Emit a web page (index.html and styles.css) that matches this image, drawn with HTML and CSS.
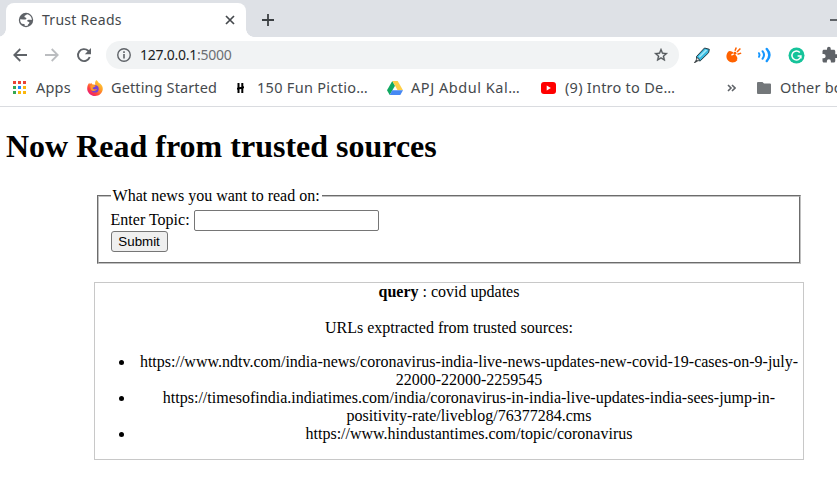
FILE: index.html
```
<!DOCTYPE html>
<html lang="en">
<head>
<meta charset="utf-8">
<title>Trust Reads</title>
<link rel="stylesheet" href="styles.css">
</head>
<body>
<header class="browser">
  <div class="tabs">
    <div class="tab">
      <svg class="globe" width="16" height="16" viewBox="0 0 16 16"><circle cx="8" cy="8" r="7.2" fill="#5f6368"/><path d="M9 2.300c-.4 1-2.500.9-2.600 2.200-.1 1.200 2 .8 2 1.900 0 1-1.200 1.200-3 1L2.200 7.200c-.3 1.700.4 3.400 1.600 4.500l2.200.2c.9.200.8 1.100.6 1.900 1.300.3 2.400.1 3.300-.3-.3-1.400 1.400-1.400 1.500-2.700.1-1.400-2.200-.7-2.200-2 0-1.200 1.800-1.200 3-1.100l1.600.2C13.900 5.300 11.900 2.800 9 2.300z" fill="#fff"/></svg>
      <span class="tab-title">Trust Reads</span>
      <svg class="close" width="10" height="10" viewBox="0 0 10 10"><path d="M1 1l8 8M9 1l-8 8" stroke="#45494d" stroke-width="1.7"/></svg>
    </div>
    <svg class="plus" width="12" height="12" viewBox="0 0 12 12"><path d="M6 0v12M0 6h12" stroke="#3c4043" stroke-width="1.8"/></svg>
    <i class="minimize"></i>
  </div>
  <div class="toolbar">
    <svg class="back" width="14" height="14" viewBox="0 0 14 14"><path d="M14 7H1.500M7.300 1L1.300 7l6 6" fill="none" stroke="#5f6368" stroke-width="1.800"/></svg>
    <svg class="forward" width="14" height="14" viewBox="0 0 14 14"><path d="M0 7h12.500M6.700 1l6 6-6 6" fill="none" stroke="#bbbdc0" stroke-width="1.800"/></svg>
    <svg class="reload" width="16" height="16" viewBox="0 0 16 16"><path d="M13.700 10A6 6 0 1 1 12.200 3.800L14 5.600" fill="none" stroke="#5f6368" stroke-width="1.900"/><path d="M15 1v6.200H8.800z" fill="#5f6368"/></svg>
    <div class="omnibox">
      <svg class="info" width="14" height="14" viewBox="0 0 14 14"><circle cx="7" cy="7" r="6.250" fill="none" stroke="#5f6368" stroke-width="1.400"/><path d="M7 6v4.500M7 3.300v1.600" stroke="#5f6368" stroke-width="1.600"/></svg>
      <span class="address">127.0.0.1<span class="port">:5000</span></span>
      <svg class="star" width="16" height="16" viewBox="0 0 24 24"><path d="M22 9.240l-7.190-.62L12 2 9.190 8.630 2 9.240l5.460 4.730L5.820 21 12 17.270 18.180 21l-1.630-7.030L22 9.240zM12 15.400l-3.760 2.270 1-4.280-3.320-2.880 4.380-.38L12 6.100l1.710 4.040 4.380.38-3.320 2.880 1 4.280L12 15.400z" fill="#505458" stroke="#505458" stroke-width=".5"/></svg>
    </div>
    <div class="extensions">
      <svg width="17" height="17" viewBox="0 0 17 17"><path d="M3.500 9.500L11.500 1l4.800 1.300-.7 3.400-8.400 8.200-3.700-.6z" fill="#36b9df" stroke="#25373f" stroke-width="1"/><path d="M5.500 9.500l7-7 2 .7-7.700 7.600z" fill="#9be5f7"/><path d="M3.500 9.600l3.800 3.500-2 .8-3.300 2H.8l2-2.800z" fill="#42484b"/><path d="M4 11l2 2-1 .4-1.500-1z" fill="#eee"/></svg>
      <svg width="16" height="16" viewBox="0 0 16 16"><path d="M2.200 4.700l9.300 8.200c-2.300 3-6.600 3.300-9.200.9-2.500-2.400-2.500-6.300-.1-9.100z" fill="#ff6200"/><ellipse cx="6.700" cy="8.600" rx="5.900" ry="2.700" transform="rotate(43 6.700 8.600)" fill="#ff6200"/><path d="M5.400 8.100l3.200-1.700" stroke="#fff" stroke-width="1.200"/><circle cx="9" cy="6.200" r="1.400" fill="#ff6200"/><path d="M9 3.800L10.300.5M11 5l3.400-3.500M11.500 7.200l3.700-1.100" stroke="#ff6200" stroke-width="1.500"/></svg>
      <svg width="15" height="16" viewBox="0 0 15 16"><g fill="none" stroke="#1697ff" stroke-width="2" stroke-linecap="round"><path d="M2 6.200q1.200 1.800 0 3.600"/><path d="M5.500 4.200q3 3.800 0 7.600"/><path d="M9.800 2q5.200 6 0 12" stroke-width="2.500"/></g></svg>
      <svg width="17" height="17" viewBox="0 0 17 17"><circle cx="8.500" cy="8.500" r="8" fill="#15c39a"/><path d="M11.800 5.400A4.500 4.500 0 1 0 12.900 9H9.600M12.900 9v2.500" fill="none" stroke="#fff" stroke-width="1.500"/></svg>
      <svg width="18" height="18" viewBox="0 0 24 24"><path d="M20.500 11H19V7c0-1.100-.9-2-2-2h-4V3.500a2.500 2.500 0 0 0-5 0V5H4c-1.100 0-2 .9-2 2v3.800h1.500a2.700 2.700 0 0 1 0 5.400H2V20c0 1.100.9 2 2 2h3.800v-1.500a2.700 2.700 0 0 1 5.400 0V22H17c1.100 0 2-.9 2-2v-4h1.500a2.500 2.500 0 0 0 0-5z" fill="#5f6368"/></svg>
    </div>
  </div>
  <nav class="bookmarks">
    <div class="bookmark apps">
      <svg width="13" height="13" viewBox="0 0 13 13"><path d="M0 0h3v3H0zM5 0h3v3H5zM10 0h3v3h-3z" fill="#ea4335"/><path d="M0 5h3v3H0zM0 10h3v3H0z" fill="#34a853"/><path d="M5 5h3v3H5z" fill="#1a87ff"/><path d="M10 5h3v3h-3zM5 10h3v3H5zM10 10h3v3h-3z" fill="#fbb70d"/></svg>
      <span>Apps</span>
    </div>
    <div class="bookmark firefox">
      <svg width="16" height="16" viewBox="0 0 16 16"><defs><linearGradient id="flame" x1="1" y1="0" x2=".2" y2="1"><stop offset="0" stop-color="#ffe740"/><stop offset=".45" stop-color="#ff9928"/><stop offset=".75" stop-color="#ff403f"/><stop offset="1" stop-color="#e31587"/></linearGradient></defs><path d="M9.200 0c1 .8 2 1.700 2.500 2.800 2.300 1.200 4.300 3.200 4.100 6.200-.3 4.200-3.600 7-7.700 7S.2 12.800.2 8.700c0-2.500.8-4.700 2.100-6l.5 1.500 1.500-1.500.7 1.500 3.300.5C8 3.200 8 1.500 9.200 0z" fill="url(#flame)"/><circle cx="8" cy="8.900" r="3.700" fill="#7542d8"/><path d="M3.300 5.500c2-.9 4.500-.6 5.200 1-1 .2-1.600 1-2.900 1.300.1 1.800 2.800 2 4.600.9-.8 2.100-4.400 3.300-6.400.7z" fill="#ff9b28"/></svg>
      <span>Getting Started</span>
    </div>
    <div class="bookmark pictionary">
      <svg width="7" height="10" viewBox="0 0 7 10"><path d="M1.500 0v10M5.300 0v10M0 5.700l7-1.500" stroke="#000" stroke-width="2"/></svg>
      <span>150 Fun Pictio…</span>
    </div>
    <div class="bookmark drive">
      <svg width="16" height="14" viewBox="0 0 16 14"><path d="M5.300 0L0 9.300 2.700 14 8 4.700z" fill="#11a861"/><path d="M5.300 0h5.400L16 9.300h-5.400z" fill="#ffcf48"/><path d="M5.300 9.300H16L13.300 14H2.700z" fill="#4688f4"/></svg>
      <span>APJ Abdul Kal…</span>
    </div>
    <div class="bookmark youtube">
      <svg width="15" height="12" viewBox="0 0 15 12"><rect width="15" height="12" rx="3" fill="#f00"/><path d="M5.700 3.500v5l4.200-2.500z" fill="#fff"/></svg>
      <span>(9) Intro to De…</span>
    </div>
    <svg class="more" width="9" height="8" viewBox="0 0 9 8"><path d="M1 1l3 3-3 3M5 1l3 3-3 3" fill="none" stroke="#5f6368" stroke-width="1.600"/></svg>
    <i class="divider"></i>
    <div class="bookmark other">
      <svg width="14" height="12" viewBox="0 0 14 12"><path d="M1 0h4.500L7 1.500h6a1 1 0 0 1 1 1V11a1 1 0 0 1-1 1H1a1 1 0 0 1-1-1V1a1 1 0 0 1 1-1z" fill="#73777a"/></svg>
      <span>Other bookmarks</span>
    </div>
  </nav>
</header>
<main>
  <h1>Now Read from trusted sources</h1>
  <form>
    <fieldset>
      <legend>What news you want to read on:</legend>
      <label for="topic">Enter Topic:</label>
      <input id="topic" type="text"><br>
      <button type="button">Submit</button>
    </fieldset>
  </form>
  <section class="results">
    <b>query</b> : covid updates<br><br>
    URLs exptracted from trusted sources:
    <ul>
      <li>https://www.ndtv.com/india-news/coronavirus-india-live-news-updates-new-covid-19-cases-on-9-july-22000-22000-2259545</li>
      <li>https://timesofindia.indiatimes.com/india/coronavirus-in-india-live-updates-india-sees-jump-in-positivity-rate/liveblog/76377284.cms</li>
      <li>https://www.hindustantimes.com/topic/coronavirus</li>
    </ul>
  </section>
</main>
</body>
</html>
```
FILE: styles.css
```
* { box-sizing: border-box; }
body {
  margin: 0;
  width: 837px;
  height: 501px;
  overflow: hidden;
  background: #fff;
  color: #000;
  font: 16px/18px "Liberation Serif", serif;
}
svg { display: block; flex: none; }
.browser {
  height: 107px;
  overflow: hidden;
  border-bottom: 1px solid #dadce0;
  font-family: "Noto Sans", "Open Sans", sans-serif;
  color: #45494d;
}
.tabs {
  display: flex;
  height: 37px;
  padding: 3px 0 0 6px;
  background: #dee1e6;
}
.tab {
  position: relative;
  display: flex;
  align-items: center;
  flex: none;
  width: 240px;
  height: 34px;
  padding: 0 11px 0 12px;
  background: #fff;
  border-radius: 8px 8px 0 0;
}
.tab::before, .tab::after {
  content: "";
  position: absolute;
  bottom: 0;
  width: 8px;
  height: 8px;
}
.tab::before { left: -8px; background: radial-gradient(circle at 0 0, transparent 7.5px, #fff 8px); }
.tab::after { right: -8px; background: radial-gradient(circle at 100% 0, transparent 7.5px, #fff 8px); }
.tab-title { margin-left: 8px; font-size: 14px; letter-spacing: .28px; white-space: nowrap; }
.close { margin-left: auto; }
.plus { margin: 11px 0 0 16px; }
.minimize { width: 7px; height: 2px; margin: 16px 0 0 auto; background: #5f6368; }
.toolbar { display: flex; align-items: center; height: 36px; padding-left: 13px; }
.forward { margin-left: 18px; }
.reload { margin-left: 17px; }
.omnibox {
  display: flex;
  align-items: center;
  flex: none;
  width: 573px;
  height: 28px;
  margin-left: 14px;
  padding: 0 10px 0 11px;
  border-radius: 14px;
  background: #f1f3f4;
}
.address { margin-left: 9px; color: #202124; font-size: 14px; letter-spacing: -.25px; }
.port { color: #6b6f73; }
.star { margin-left: auto; }
.extensions { display: flex; align-items: center; gap: 15.7px; margin-left: 14px; }
.bookmarks {
  display: flex;
  align-items: center;
  height: 33px;
  padding: 0 0 4px 13px;
  font-size: 14.5px;
  white-space: nowrap;
}
.bookmark { display: flex; align-items: center; flex: none; }
.bookmark span { margin-top: -1px; }
.apps { width: 74px; gap: 10px; letter-spacing: .2px; }
.firefox { width: 150px; gap: 8px; letter-spacing: .12px; }
.pictionary { width: 150px; gap: 13px; letter-spacing: .3px; }
.drive { width: 154px; gap: 8px; letter-spacing: .55px; }
.youtube { width: 186px; gap: 9px; letter-spacing: .25px; }
.divider { width: 1px; height: 16px; margin: 0 12px 0 9px; background: #c9cbce; }
.other { gap: 9px; letter-spacing: .2px; }
main { padding: 21px 33px 0 94px; }
h1 { margin: 0 0 22px -88px; font-size: 32px; line-height: 37px; }
form { margin-bottom: 18px; }
fieldset { margin: 0 3px; padding: 4.600px 11.600px 10px; border: 2px groove #c0c0c0; }
legend { padding: 0 2px; }
input {
  width: 185px;
  height: 21px;
  margin: 0;
  padding: 1px 2px;
  border: 1px solid #767676;
  border-radius: 2px;
  background: #fff;
}
button {
  display: block;
  width: 57px;
  height: 21px;
  padding: 1px 0 0;
  border: 1px solid #767676;
  border-radius: 3px;
  background: #efefef;
  color: #000;
  font: 13.333px/18px "Liberation Sans", sans-serif;
}
.results { width: 710px; border: 1px solid #c8c8c8; text-align: center; }
ul { margin: 16px 0; padding: 0 0 0 40px; }
```
